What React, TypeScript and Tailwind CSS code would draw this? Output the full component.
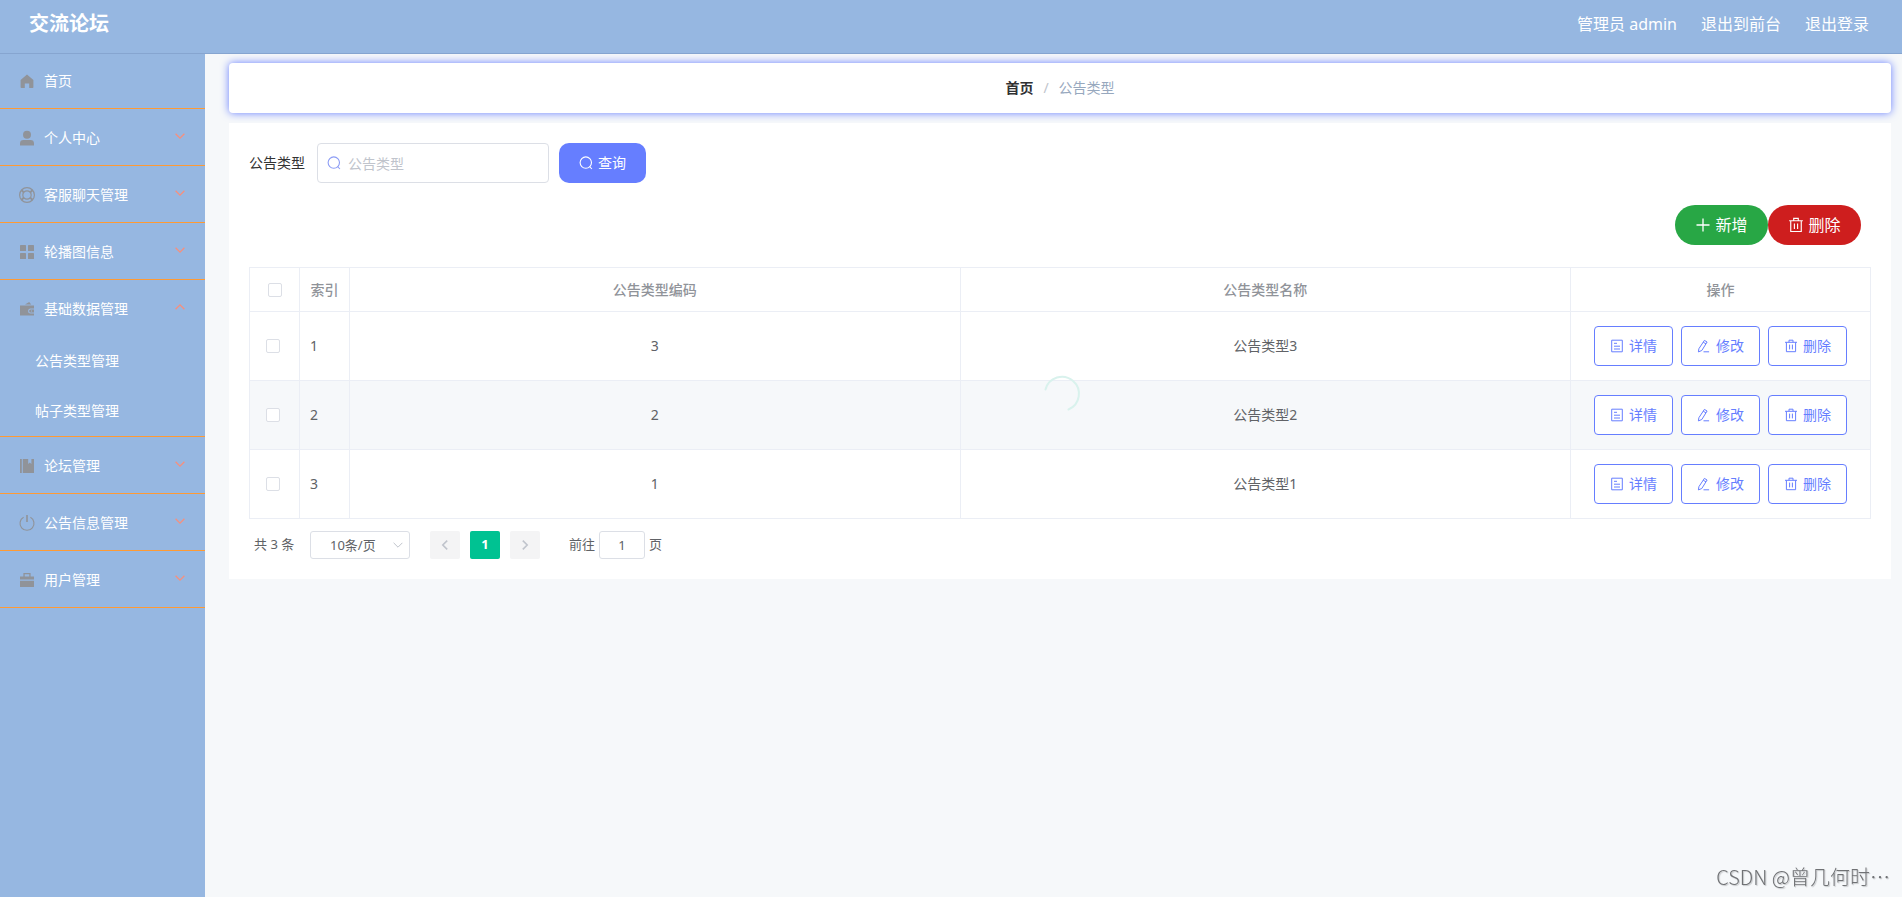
import type { ReactNode } from "react";

type IconProps = { className?: string };

const HomeIcon = () => (
  <path d="M9 2.5 2.6 8v7.2c0 .5.3.8.8.8h3.4v-4.6h4.4V16h3.4c.5 0 .8-.3.8-.8V8z" />
);
const UserIcon = () => (
  <>
    <circle cx="9" cy="5.8" r="4" />
    <path d="M2 16.5v-2c0-2.3 1.2-3.4 3.5-3.4h7c2.3 0 3.5 1.1 3.5 3.4v2z" />
  </>
);
const HelpIcon = () => (
  <g fill="none" stroke="currentColor" strokeWidth="1.2">
    <circle cx="9" cy="9" r="7.4" />
    <circle cx="9" cy="9" r="4.2" />
    <path d="m3.6 4.2 2.2 2.2M14.4 4.2l-2.2 2.2M3.6 13.8l2.2-2.2M14.4 13.8l-2.2-2.2" strokeWidth="2" />
  </g>
);
const MenuIcon = () => (
  <>
    <rect x="2" y="2" width="6" height="6" rx="0.6" />
    <rect x="10" y="2" width="6" height="6" rx="0.6" />
    <rect x="2" y="10" width="6" height="6" rx="0.6" />
    <rect x="10" y="10" width="6" height="6" rx="0.6" />
  </>
);
const WalletIcon = () => (
  <>
    <path d="M7 4.6 11.2 2l2 2.6z" />
    <path
      fillRule="evenodd"
      d="M2 5.4h14v3h-3.4a2.2 2.2 0 0 0 0 5H16v2H2zM12.6 9.4H16v3h-3.4a1.5 1.5 0 0 1 0-3zm.4 1v1h1v-1z"
    />
  </>
);
const BookIcon = () => (
  <>
    <path d="M2 2h1.8v14H2zM4.8 2h5.4v5l1.6-1.4L13.4 7V2H16v14H4.8z" />
  </>
);
const PowerIcon = () => (
  <g fill="none" stroke="currentColor" strokeWidth="1.1">
    <path d="M5.6 3.2a7 7 0 1 0 6.8 0" />
    <path d="M9 1v7" strokeWidth="1.6" />
  </g>
);
const BriefcaseIcon = () => (
  <>
    <path fillRule="evenodd" d="M5.4 5.4V2h7.2v3.4H16v3.2H2V5.4zm1.3 0h4.6V3.3H6.7z" />
    <path d="M2 9.8h14V16H2z" />
  </>
);

const Chevron = ({ className = "" }: IconProps) => (
  <svg viewBox="0 0 10 10" fill="none" stroke="currentColor" className={className} aria-hidden="true">
    <path d="M.6 2.8 5 7.2l4.4-4.4" />
  </svg>
);

const SearchIcon = ({ className = "" }: IconProps) => (
  <svg viewBox="0 0 14 14" fill="none" stroke="currentColor" strokeWidth="1.1" className={className} aria-hidden="true">
    <circle cx="6.8" cy="6.6" r="5.7" />
    <path d="m10.6 10.5 2.3 2.5" />
  </svg>
);

const PlusIcon = ({ className = "" }: IconProps) => (
  <svg viewBox="0 0 16 16" fill="none" stroke="currentColor" strokeWidth="1.3" className={className} aria-hidden="true">
    <path d="M8 1.5v13M1.5 8h13" />
  </svg>
);

const TrashIcon = ({ className = "" }: IconProps) => (
  <svg viewBox="0 0 14 14" fill="none" stroke="currentColor" className={className} aria-hidden="true">
    <path d="M1 3.3h12M5 3.3V1.2h4v2.1M2.4 3.3v9.4h9.2V3.3M5.6 5.6v4.8M8.4 5.6v4.8" />
  </svg>
);

const TicketIcon = ({ className = "" }: IconProps) => (
  <svg viewBox="0 0 14 14" fill="none" stroke="currentColor" className={className} aria-hidden="true">
    <path d="M1.7 1.2h10.6v11.6H1.7zM4 4.3h3M4 7.2h6M4 10h6" />
  </svg>
);

const EditIcon = ({ className = "" }: IconProps) => (
  <svg viewBox="0 0 14 14" fill="none" stroke="currentColor" className={className} aria-hidden="true">
    <path d="M7.4 1.4 10.1 3 4.8 11.5l-3.4 1.4.5-3.2zM6.2 3.2l2.8 1.7M6.5 12.8h5.6" />
  </svg>
);

type MenuEntry = { label: string; icon: ReactNode; children?: string[]; leaf?: boolean };

const menu: MenuEntry[] = [
  { label: "首页", icon: <HomeIcon />, leaf: true },
  { label: "个人中心", icon: <UserIcon /> },
  { label: "客服聊天管理", icon: <HelpIcon /> },
  { label: "轮播图信息", icon: <MenuIcon /> },
  { label: "基础数据管理", icon: <WalletIcon />, children: ["公告类型管理", "帖子类型管理"] },
  { label: "论坛管理", icon: <BookIcon /> },
  { label: "公告信息管理", icon: <PowerIcon /> },
  { label: "用户管理", icon: <BriefcaseIcon /> },
];

const rows = [
  { index: 1, code: "3", name: "公告类型3" },
  { index: 2, code: "2", name: "公告类型2" },
  { index: 3, code: "1", name: "公告类型1" },
];

const actions = [
  { label: "详情", Icon: TicketIcon },
  { label: "修改", Icon: EditIcon },
  { label: "删除", Icon: TrashIcon },
];

const checkboxClass =
  "block size-[14px] appearance-none rounded-xs border border-[#dcdfe6] bg-white checked:bg-[#00c292]";

function Sidebar() {
  return (
    <nav className="w-[205px] shrink-0 bg-[#96b7e1] text-sm text-white">
      <ul className="-mt-0.5">
        {menu.map((item) => (
          <li key={item.label} className="border-b border-[#ff9a33]">
            <button type="button" className="flex h-14 w-full items-center gap-2 pr-5 pl-[18px] pt-0.5 text-left">
              <svg viewBox="0 0 18 18" fill="currentColor" className="size-[18px] text-[#909399]" aria-hidden="true">
                {item.icon}
              </svg>
              <span className="flex-1">{item.label}</span>
              {!item.leaf && (
                <Chevron
                  className={
                    item.children
                      ? "mb-1 size-[10px] rotate-180 stroke-[1.3] text-[#f88f7c]"
                      : "mb-1 size-[10px] stroke-[1.3] text-[#f88f7c]"
                  }
                />
              )}
            </button>
            {item.children && (
              <ul>
                {item.children.map((child) => (
                  <li key={child}>
                    <a href="#" className="flex h-[50px] items-center pl-[35px]">
                      {child}
                    </a>
                  </li>
                ))}
              </ul>
            )}
          </li>
        ))}
      </ul>
    </nav>
  );
}

function DataTable() {
  const cell = "border-r border-b border-[#ebeef5]";
  return (
    <div className="relative border-t border-l border-[#ebeef5]">
      <table className="w-full table-fixed border-separate border-spacing-0 text-sm text-[#606266]">
        <colgroup>
          <col className="w-[50px]" />
          <col className="w-[50px]" />
          <col />
          <col />
          <col className="w-[300px]" />
        </colgroup>
        <thead>
          <tr className="h-11 text-[#909399]">
            <th className={`${cell} p-0`}>
              <input type="checkbox" aria-label="全选" className={`${checkboxClass} mx-auto`} />
            </th>
            <th className={`${cell} p-0 text-center font-medium`}>索引</th>
            <th className={`${cell} p-0 font-medium`}>公告类型编码</th>
            <th className={`${cell} p-0 font-medium`}>公告类型名称</th>
            <th className={`${cell} p-0 font-medium`}>操作</th>
          </tr>
        </thead>
        <tbody>
          {rows.map((row) => (
            <tr key={row.index} className="h-[69px] even:bg-[#f6f8fa]">
              <td className={`${cell} p-0 pl-4`}>
                <input type="checkbox" aria-label={row.name} className={checkboxClass} />
              </td>
              <td className={`${cell} p-0 pl-[10px]`}>{row.index}</td>
              <td className={`${cell} p-0 text-center`}>{row.code}</td>
              <td className={`${cell} p-0 text-center`}>{row.name}</td>
              <td className={`${cell} p-0`}>
                <div className="flex justify-center gap-2">
                  {actions.map(({ label, Icon }) => (
                    <button
                      key={label}
                      type="button"
                      className="flex h-10 w-[79px] items-center justify-center gap-[5px] rounded border border-[#667eff] bg-white text-[#667eff]"
                    >
                      <Icon className="size-[14px]" />
                      {label}
                    </button>
                  ))}
                </div>
              </td>
            </tr>
          ))}
        </tbody>
      </table>
      <div className="pointer-events-none absolute inset-0 flex items-center justify-center">
        <svg viewBox="0 0 42 42" fill="none" className="size-[42px] text-[#d9f2ed]" aria-hidden="true">
          <path d="M5.5 16.5A17 17 0 1 1 28.5 36.5" stroke="currentColor" strokeWidth="2" strokeLinecap="round" />
        </svg>
      </div>
    </div>
  );
}

function Pagination() {
  return (
    <div className="flex items-center pt-3 pl-[5px] text-[13px] text-[#606266]">
      <span className="w-14">共 3 条</span>
      <div className="relative">
        <select
          aria-label="每页条数"
          className="block h-7 w-[100px] appearance-none rounded-[3px] border border-[#dcdfe6] bg-white pr-6 pl-[19px] leading-[26px]"
        >
          <option>10条/页</option>
        </select>
        <Chevron className="pointer-events-none absolute top-[9px] right-[7px] size-[10px] text-[#c0c4cc]" />
      </div>
      <div className="ml-5 flex gap-[10px]">
        <button type="button" aria-label="上一页" className="flex h-7 w-[30px] items-center justify-center rounded-xs bg-[#f4f4f5] text-[#c0c4cc]">
          <Chevron className="size-[10px] rotate-90 stroke-[1.6]" />
        </button>
        <button type="button" className="h-7 w-[30px] rounded-xs bg-[#00c292] font-bold text-white">
          1
        </button>
        <button type="button" aria-label="下一页" className="flex h-7 w-[30px] items-center justify-center rounded-xs bg-[#f4f4f5] text-[#c0c4cc]">
          <Chevron className="size-[10px] -rotate-90 stroke-[1.6]" />
        </button>
      </div>
      <label className="ml-[29px] flex items-center gap-1">
        前往
        <input
          type="text"
          defaultValue="1"
          className="h-7 w-[46px] rounded-[3px] border border-[#dcdfe6] bg-white text-center"
        />
        页
      </label>
    </div>
  );
}

export default function App() {
  return (
    <div className="flex min-h-screen flex-col bg-[#f6f8fa] font-['Noto_Sans','Noto_Sans_CJK_SC',sans-serif] text-[#333]">
      <header className="flex h-[54px] items-start justify-between border-b border-[#86a5d0] bg-[#96b7e1] pt-2 pr-[33px] pl-[29px] text-white">
        <h1 className="text-xl leading-8 font-bold">交流论坛</h1>
        <div className="flex gap-6 text-base leading-8">
          <span>管理员 admin</span>
          <a href="#">退出到前台</a>
          <a href="#">退出登录</a>
        </div>
      </header>

      <div className="flex flex-1">
        <Sidebar />
        <main className="min-w-0 flex-1 pt-[9px] pr-[11px] pl-6">
          <nav
            aria-label="breadcrumb"
            className="flex h-[50px] items-center justify-center gap-[10px] rounded bg-white text-sm shadow-[0_0_8px_#667eff]"
          >
            <a href="#" className="font-bold text-[#303133]">
              首页
            </a>
            <span className="text-[#c0c4cc]">/</span>
            <span className="text-[#97a8be]">公告类型</span>
          </nav>

          <section className="mt-[10px] bg-white p-5">
            <form className="flex items-center text-sm">
              <label htmlFor="type-name" className="pr-3">
                公告类型
              </label>
              <div className="relative">
                <input
                  id="type-name"
                  type="text"
                  placeholder="公告类型"
                  className="block h-10 w-[232px] rounded border border-[#dcdfe6] bg-white pr-4 pl-[30px] placeholder:text-[#c0c4cc]"
                />
                <SearchIcon className="pointer-events-none absolute top-[13px] left-[10px] size-[14px] text-[#8c9cf5]" />
              </div>
              <button
                type="button"
                className="ml-[10px] flex h-10 w-[87px] items-center justify-center gap-[5px] rounded-[10px] bg-[#667eff] text-white"
              >
                <SearchIcon className="size-[14px]" />
                查询
              </button>
            </form>

            <div className="mt-[22px] mb-[22px] flex justify-end pr-[10px] text-base text-white">
              <button type="button" className="flex h-10 w-[93px] items-center justify-center gap-1 rounded-[20px] bg-[#28a745]">
                <PlusIcon className="size-4" />
                新增
              </button>
              <button type="button" className="flex h-10 w-[93px] items-center justify-center gap-1 rounded-[20px] bg-[#ce1e1e]">
                <TrashIcon className="size-4" />
                删除
              </button>
            </div>

            <DataTable />
            <Pagination />
          </section>
        </main>
      </div>

      <div className="pointer-events-none fixed right-3 bottom-1 font-['Noto_Sans_CJK_SC',sans-serif] text-xl leading-8 font-light text-[#707275] [text-shadow:1px_1px_1px_#c4c6c9]">
        CSDN @曾几何时…
      </div>
    </div>
  );
}
